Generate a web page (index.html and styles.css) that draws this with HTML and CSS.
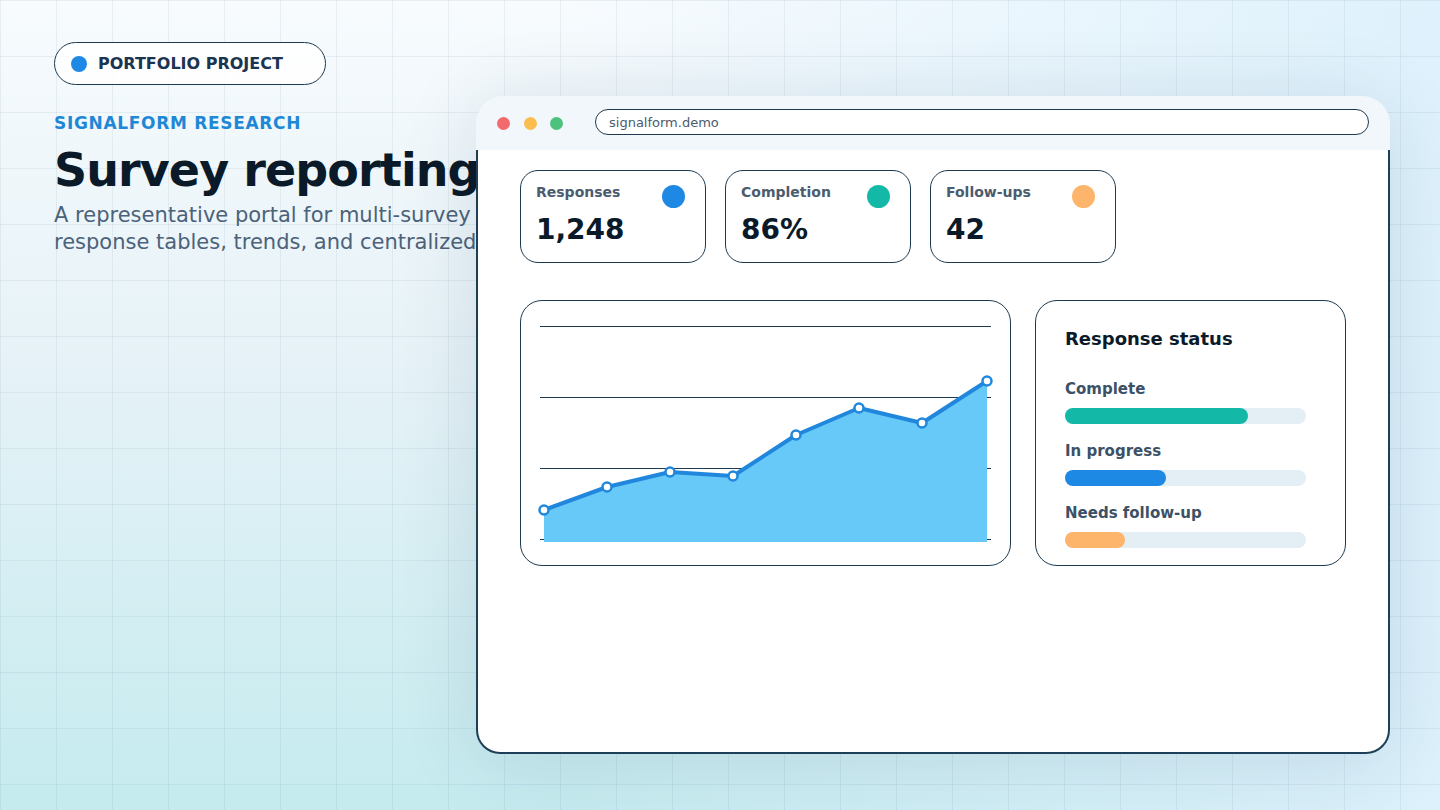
FILE: index.html
```html
<!DOCTYPE html>
<html lang="en">

<head>
    <meta charset="UTF-8">
    <meta name="viewport" content="width=device-width, initial-scale=1.0">
    <title>Signalform Research</title>
    <link rel="stylesheet" href="styles.css">
</head>

<body>
    <div class="stage">
        <div class="hero">
            <div class="badge">
                <span class="badge-dot"></span>
                <span>PORTFOLIO PROJECT</span>
            </div>
            <p class="eyebrow">SIGNALFORM RESEARCH</p>
            <h1>Survey reporting</h1>
            <p class="lead">A representative portal for multi-survey response tables, trends, and centralized</p>
        </div>

        <div class="window">
            <div class="topbar">
                <div class="lights">
                    <span class="light red"></span>
                    <span class="light yellow"></span>
                    <span class="light green"></span>
                </div>
                <div class="url">signalform.demo</div>
            </div>

            <div class="content">
                <div class="stats">
                    <div class="stat">
                        <div class="stat-head">
                            <span class="stat-label">Responses</span>
                            <span class="stat-dot blue"></span>
                        </div>
                        <div class="stat-value">1,248</div>
                    </div>
                    <div class="stat">
                        <div class="stat-head">
                            <span class="stat-label">Completion</span>
                            <span class="stat-dot teal"></span>
                        </div>
                        <div class="stat-value">86%</div>
                    </div>
                    <div class="stat">
                        <div class="stat-head">
                            <span class="stat-label">Follow-ups</span>
                            <span class="stat-dot orange"></span>
                        </div>
                        <div class="stat-value">42</div>
                    </div>
                </div>

                <div class="panels">
                    <div class="panel chart">
                        <svg width="489" height="264" viewBox="0 0 489 264">
                            <g stroke="#1d3a50" stroke-width="1">
                                <line x1="19" y1="25.5" x2="470" y2="25.5" />
                                <line x1="19" y1="96.5" x2="470" y2="96.5" />
                                <line x1="19" y1="167.5" x2="470" y2="167.5" />
                                <line x1="19" y1="238.5" x2="470" y2="238.5" />
                            </g>
                            <polygon fill="#66c9f8"
                                points="23,209 86,186 149,171 212,175 275,134 338,107 401,122 466,80 466,241 23,241" />
                            <polyline fill="none" stroke="#2187dc" stroke-width="4" stroke-linejoin="round"
                                points="23,209 86,186 149,171 212,175 275,134 338,107 401,122 466,80" />
                            <g fill="#fff" stroke="#2187dc" stroke-width="2.5">
                                <circle cx="23" cy="209" r="4.5" />
                                <circle cx="86" cy="186" r="4.5" />
                                <circle cx="149" cy="171" r="4.5" />
                                <circle cx="212" cy="175" r="4.5" />
                                <circle cx="275" cy="134" r="4.5" />
                                <circle cx="338" cy="107" r="4.5" />
                                <circle cx="401" cy="122" r="4.5" />
                                <circle cx="466" cy="80" r="4.5" />
                            </g>
                        </svg>
                    </div>

                    <div class="panel status">
                        <h2>Response status</h2>
                        <div class="row">
                            <span class="row-label">Complete</span>
                            <div class="track"><div class="fill teal" style="width: 76%"></div></div>
                        </div>
                        <div class="row">
                            <span class="row-label">In progress</span>
                            <div class="track"><div class="fill blue" style="width: 42%"></div></div>
                        </div>
                        <div class="row">
                            <span class="row-label">Needs follow-up</span>
                            <div class="track"><div class="fill orange" style="width: 25%"></div></div>
                        </div>
                    </div>
                </div>
            </div>
        </div>
    </div>
</body>

</html>
```

FILE: styles.css
```css
* {
    box-sizing: border-box;
}

body {
    margin: 0;
    font-family: "DejaVu Sans", "Liberation Sans", sans-serif;
    color: #0d1b2a;
}

.stage {
    position: relative;
    width: 1440px;
    height: 810px;
    overflow: hidden;
    background-color: #e6f3f8;
    background-image:
        linear-gradient(rgba(40, 80, 110, .07) 1px, transparent 1px),
        linear-gradient(90deg, rgba(40, 80, 110, .07) 1px, transparent 1px),
        linear-gradient(90deg, rgba(220, 240, 251, 0) 40%, rgba(221, 241, 252, .95) 100%),
        linear-gradient(180deg, #f7fbfe 0%, #e6f2f7 45%, #c5ebef 100%);
    background-size: 56px 56px, 56px 56px, 100% 100%, 100% 100%;
}

/* left intro */
.hero {
    padding: 42px 0 0 54px;
    width: 560px;
}

.badge {
    display: inline-flex;
    align-items: center;
    gap: 11px;
    height: 43px;
    padding: 0 42px 0 16px;
    border: 1px solid #1d3a50;
    border-radius: 999px;
    background: rgba(255, 255, 255, .85);
    font-size: 16px;
    font-weight: bold;
    color: #1b3550;
}

.badge-dot {
    width: 16px;
    height: 16px;
    border-radius: 50%;
    background: #1e88e5;
}

.eyebrow {
    margin: 28px 0 0;
    font-size: 17px;
    font-weight: bold;
    letter-spacing: .04em;
    color: #1f88d6;
}

h1 {
    margin: 11px 0 0;
    font-size: 46px;
    line-height: 52px;
    letter-spacing: -.02em;
    white-space: nowrap;
    color: #0b1a29;
}

.lead {
    margin: 6px 0 0;
    max-width: 500px;
    font-size: 21px;
    line-height: 27px;
    color: #4b6279;
}

/* browser mockup */
.window {
    position: absolute;
    left: 476px;
    top: 96px;
    width: 914px;
    height: 658px;
    display: flex;
    flex-direction: column;
    border-radius: 28px 28px 24px 24px;
    box-shadow: 0 6px 80px rgba(20, 50, 80, .12);
}

.topbar {
    height: 54px;
    display: flex;
    align-items: center;
    padding: 0 21px;
    background: #f1f7fb;
    border-radius: 28px 28px 0 0;
}

.lights {
    display: flex;
    gap: 13.5px;
    margin-right: 32px;
}

.light {
    width: 13px;
    height: 13px;
    border-radius: 50%;
}

.light.red {
    background: #f26a6c;
}

.light.yellow {
    background: #fbbd4d;
}

.light.green {
    background: #4dc27d;
}

.url {
    flex: 1;
    height: 26px;
    margin-top: -2px;
    padding: 0 13px;
    display: flex;
    align-items: center;
    border: 1px solid #1d3a50;
    border-radius: 999px;
    background: #fff;
    font-size: 13px;
    color: #4a5b6c;
}

.content {
    flex: 1;
    padding: 20px 42px 0;
    background: #fff;
    border: 2px solid #1d3f57;
    border-top: none;
    border-radius: 0 0 24px 24px;
}

.stats {
    display: flex;
    gap: 19px;
}

.stat {
    width: 186px;
    height: 93px;
    padding: 13px 20px 0 15px;
    border: 1px solid #1d3a50;
    border-radius: 18px;
}

.stat-head {
    display: flex;
    justify-content: space-between;
    align-items: flex-start;
}

.stat-label {
    font-size: 14px;
    font-weight: bold;
    line-height: 17px;
    color: #4a5c6e;
}

.stat-dot {
    width: 23px;
    height: 23px;
    margin-top: 1px;
    border-radius: 50%;
}

.blue {
    background: #1e88e5;
}

.teal {
    background: #14b8a6;
}

.orange {
    background: #fdb56b;
}

.stat-value {
    margin-top: 5px;
    font-size: 28px;
    font-weight: bold;
    line-height: 34px;
    color: #0b1a29;
}

.panels {
    display: grid;
    grid-template-columns: 491px 311px;
    gap: 24px;
    margin-top: 37px;
}

.panel {
    height: 266px;
    border: 1px solid #1d3a50;
    border-radius: 22px;
}

.chart svg {
    display: block;
}

.status {
    padding: 27px 39px 0 29px;
}

.status h2 {
    margin: 0 0 30px;
    font-size: 18px;
    line-height: 22px;
    color: #0b1a29;
}

.row {
    margin-bottom: 18px;
}

.row-label {
    display: block;
    font-size: 15px;
    font-weight: bold;
    line-height: 18px;
    color: #3d5166;
}

.track {
    height: 16px;
    margin-top: 10px;
    border-radius: 8px;
    background: #e3eef5;
}

.fill {
    height: 100%;
    border-radius: 8px;
}
```
